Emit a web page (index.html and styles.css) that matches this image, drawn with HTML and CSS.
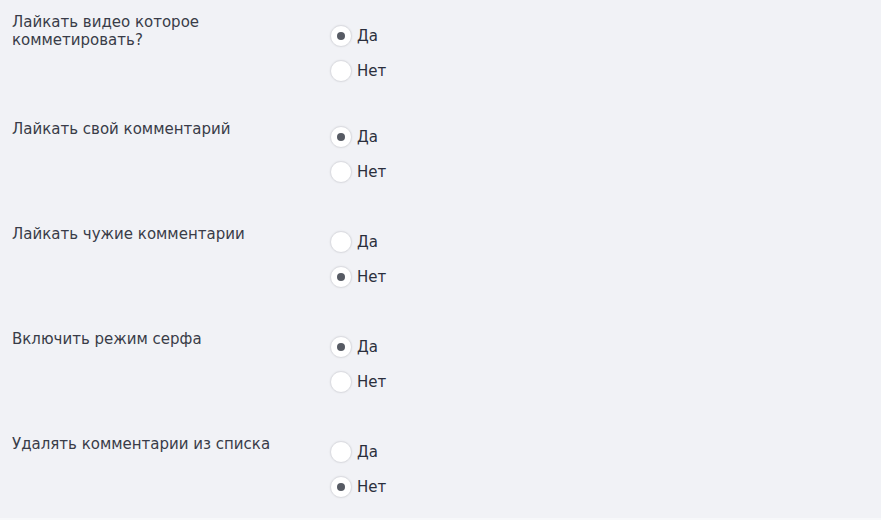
FILE: index.html
```html
<!DOCTYPE html>
<html lang="ru">
<head>
  <meta charset="UTF-8">
  <meta name="viewport" content="width=device-width, initial-scale=1.0">
  <link rel="stylesheet" href="styles.css">
</head>
<body>
  <div class="page">

    <!--====== like video =====-->
    <div class="row row--tall">
      <div class="label">Лайкать видео которое<br>комметировать?</div>
      <div class="options">
        <label class="option"><input type="radio" name="likeVideo" checked><span class="dot"></span>Да</label>
        <label class="option"><input type="radio" name="likeVideo"><span class="dot"></span>Нет</label>
      </div>
    </div>

    <!--====== like own comment =====-->
    <div class="row">
      <div class="label">Лайкать свой комментарий</div>
      <div class="options">
        <label class="option"><input type="radio" name="likeOwn" checked><span class="dot"></span>Да</label>
        <label class="option"><input type="radio" name="likeOwn"><span class="dot"></span>Нет</label>
      </div>
    </div>

    <!--====== like other comments =====-->
    <div class="row">
      <div class="label">Лайкать чужие комментарии</div>
      <div class="options">
        <label class="option"><input type="radio" name="likeOther"><span class="dot"></span>Да</label>
        <label class="option"><input type="radio" name="likeOther" checked><span class="dot"></span>Нет</label>
      </div>
    </div>

    <!--====== surf mode =====-->
    <div class="row">
      <div class="label">Включить режим серфа</div>
      <div class="options">
        <label class="option"><input type="radio" name="surf" checked><span class="dot"></span>Да</label>
        <label class="option"><input type="radio" name="surf"><span class="dot"></span>Нет</label>
      </div>
    </div>

    <!--====== remove comments =====-->
    <div class="row">
      <div class="label">Удалять комментарии из списка</div>
      <div class="options">
        <label class="option"><input type="radio" name="remove"><span class="dot"></span>Да</label>
        <label class="option"><input type="radio" name="remove" checked><span class="dot"></span>Нет</label>
      </div>
    </div>

  </div>
</body>
</html>
```

FILE: styles.css
```css
html {
  margin: 0;
  padding: 0;
  background-color: #f7f8fa;
  font-family: 'DejaVu Sans', sans-serif;
}

body {
  margin: 0;
}

.page {
  background-color: #f1f2f6;
  height: 505px;
  padding: 13px 0 0 12px;
}

.row {
  display: grid;
  grid-template-columns: 318px 1fr;
  align-items: start;
  height: 105px;
}

.row--tall {
  height: 107px;
}

.label {
  font-size: 15px;
  line-height: 18px;
  color: #393c48;
}

.options {
  display: flex;
  flex-direction: column;
  gap: 13px;
  margin-top: 6px;
}

.row--tall .options {
  margin-top: 12px;
}

.option {
  display: flex;
  align-items: center;
  height: 22px;
  font-size: 15px;
  color: #2b2f3c;
  cursor: pointer;
}

.option input {
  display: none;
}

.dot {
  box-sizing: border-box;
  width: 22px;
  height: 22px;
  margin-right: 5px;
  border-radius: 50%;
  border: 1px solid #dcdde2;
  background-color: #fff;
  box-shadow: 0 0 2px rgba(0,0,0,0.08);
  display: flex;
  align-items: center;
  justify-content: center;
}

.option input:checked + .dot::after {
  content: '';
  width: 8px;
  height: 8px;
  border-radius: 50%;
  background-color: #575b64;
}
```
